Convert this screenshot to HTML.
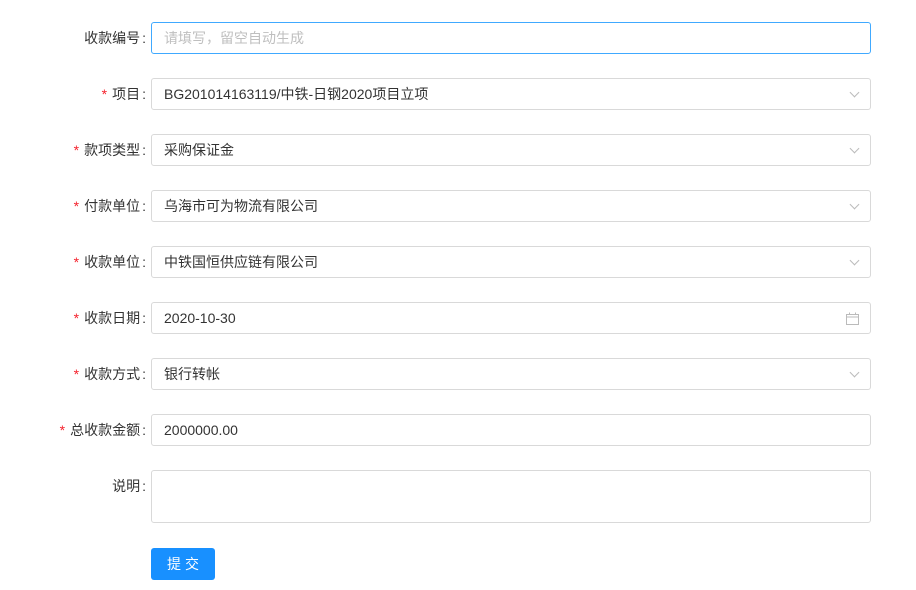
<!DOCTYPE html>
<html><head><meta charset="utf-8"><style>
body{margin:0;background:#fff;font-family:"Liberation Sans","Noto Sans CJK SC",sans-serif;font-size:14px;color:#333;}
.row{position:absolute;left:0;width:916px;height:32px;}
.lab{position:absolute;right:770px;top:0;line-height:32px;color:#333;white-space:nowrap;}
.lab i{color:#f5222d;font-style:normal;margin-right:5px;font-family:"Liberation Sans",sans-serif;}
.lab b{font-weight:normal;margin-left:2px;}
.in{position:absolute;left:151px;top:0;height:30px;border:1px solid #d9d9d9;border-radius:3px;line-height:31px;padding-left:12px;width:706px;color:#333;}
.in.ph{color:#bfbfbf;border-color:#40a9ff;}
.arr{position:absolute;right:12px;top:10px;width:6px;height:6px;border-right:1px solid #bbb;border-bottom:1px solid #bbb;transform:rotate(45deg);}
.btn{position:absolute;left:151px;top:548px;width:64px;height:32px;background:#1890ff;border-radius:3px;color:#fff;text-align:center;line-height:32px;font-size:14px;letter-spacing:4px;text-indent:4px;}
</style></head><body>
<div class="row" style="top:22px"><div class="lab">收款编号<b>:</b></div><div class="in ph">请填写，留空自动生成</div></div>
<div class="row" style="top:78px"><div class="lab"><i>*</i>项目<b>:</b></div><div class="in">BG201014163119/中铁-日钢2020项目立项<span class="arr"></span></div></div>
<div class="row" style="top:134px"><div class="lab"><i>*</i>款项类型<b>:</b></div><div class="in">采购保证金<span class="arr"></span></div></div>
<div class="row" style="top:190px"><div class="lab"><i>*</i>付款单位<b>:</b></div><div class="in">乌海市可为物流有限公司<span class="arr"></span></div></div>
<div class="row" style="top:246px"><div class="lab"><i>*</i>收款单位<b>:</b></div><div class="in">中铁国恒供应链有限公司<span class="arr"></span></div></div>
<div class="row" style="top:302px"><div class="lab"><i>*</i>收款日期<b>:</b></div><div class="in">2020-10-30
<svg style="position:absolute;right:11px;top:9px" width="13" height="13" viewBox="0 0 13 13"><rect x="0.5" y="2.5" width="12" height="10" fill="none" stroke="#bbb"/><line x1="0.5" y1="5" x2="12.5" y2="5" stroke="#bbb"/><line x1="3.5" y1="0.5" x2="3.5" y2="3" stroke="#bbb"/><line x1="9.5" y1="0.5" x2="9.5" y2="3" stroke="#bbb"/></svg></div></div>
<div class="row" style="top:358px"><div class="lab"><i>*</i>收款方式<b>:</b></div><div class="in">银行转帐<span class="arr"></span></div></div>
<div class="row" style="top:414px"><div class="lab"><i>*</i>总收款金额<b>:</b></div><div class="in">2000000.00</div></div>
<div class="row" style="top:470px;height:54px"><div class="lab">说明<b>:</b></div><div class="in" style="height:51px"></div></div>
<div class="btn">提交</div>
</body></html>
